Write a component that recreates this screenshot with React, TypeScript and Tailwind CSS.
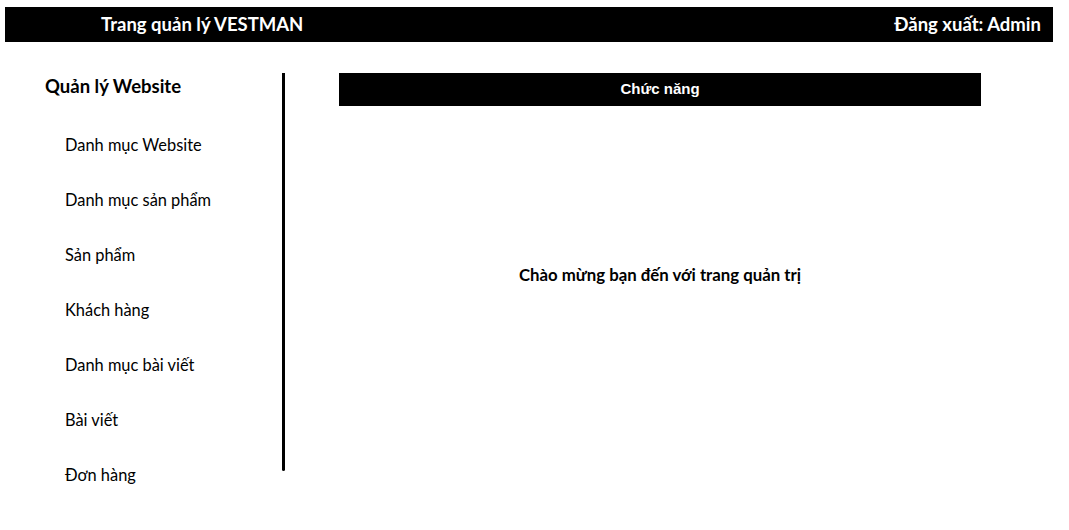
import React from "react";

const menuItems = [
  "Danh mục Website",
  "Danh mục sản phẩm",
  "Sản phẩm",
  "Khách hàng",
  "Danh mục bài viết",
  "Bài viết",
  "Đơn hàng",
];

const App = () => {
  return (
    <div className="w-full bg-white text-black pt-[7px]" style={{ fontFamily: "Lato, 'Noto Sans', sans-serif" }}>
      <header className="ml-[5px] mr-[16px] h-[35px] bg-black flex items-center justify-between pl-[96px] pr-[12px] text-white font-bold text-[18.5px]">
        <p>Trang quản lý VESTMAN</p>
        <p>Đăng xuất: Admin</p>
      </header>

      <div className="flex mt-[31px]">
        <aside className="w-[282px] pl-[45px]">
          <p className="text-[18.5px] font-bold leading-[26px]">Quản lý Website</p>
          <ul className="mt-[19px] pl-[20px]">
            {menuItems.map((item) => (
              <li key={item} className="h-[55px] flex items-center text-[16.4px]">
                {item}
              </li>
            ))}
          </ul>
        </aside>
        <div className="w-[3px] h-[398px] bg-black rounded-b-full" />

        <main className="flex-1 pl-[54px]">
          <div
            className="w-[642px] h-[33px] bg-black text-white flex items-center justify-center font-bold text-[15px]"
            style={{ fontFamily: "'Liberation Sans', Arial, sans-serif" }}
          >
            Chức năng
          </div>
          <div className="w-[642px] flex justify-center mt-[156px]">
            <p className="font-bold text-[16.8px]">Chào mừng bạn đến với trang quản trị</p>
          </div>
        </main>
      </div>
    </div>
  );
};

export default App;
